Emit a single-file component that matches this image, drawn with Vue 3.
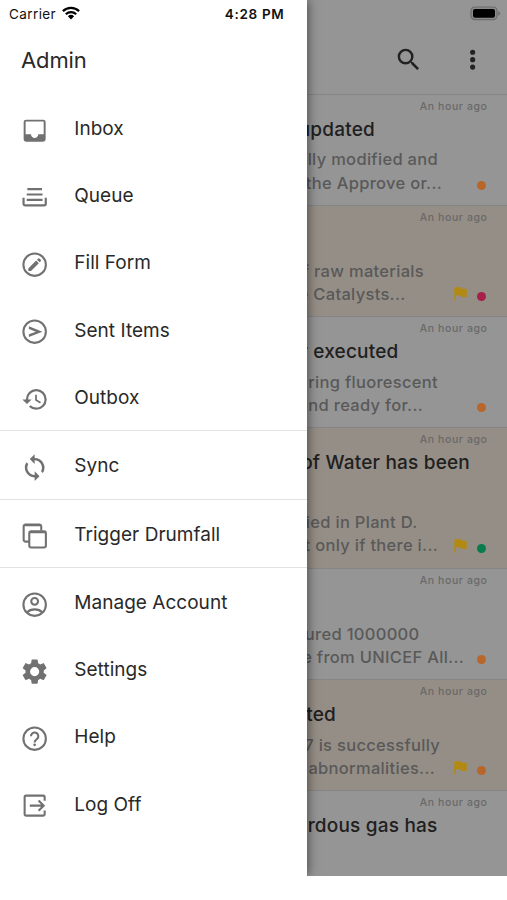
<script setup>
const groups = [
  [
    { label: 'Inbox', icon: 'inbox' },
    { label: 'Queue', icon: 'queue' },
    { label: 'Fill Form', icon: 'form' },
    { label: 'Sent Items', icon: 'sent' },
    { label: 'Outbox', icon: 'outbox' }
  ],
  [{ label: 'Sync', icon: 'sync' }],
  [{ label: 'Trigger Drumfall', icon: 'trigger' }],
  [
    { label: 'Manage Account', icon: 'account' },
    { label: 'Settings', icon: 'settings' },
    { label: 'Help', icon: 'help' },
    { label: 'Log Off', icon: 'logoff' }
  ]
]

// inset: distance from the right screen edge to the end of each line
const messages = [
  { title: ['updated', 132], body: [['lly modified and', 69], ['the Approve or...', 65]], dot: 'orange' },
  { title: ['', 0], body: [['f raw materials', 83], ['e Catalysts...', 101.5]], dot: 'pink', flagged: true },
  { title: ['r executed', 108.5], body: [['ring fluorescent', 69], ['and ready for...', 84]], dot: 'orange' },
  { title: ['of Water has been', 37], body: [['ied in Plant D.', 89.5], ['t only if there i...', 69]], dot: 'green', flagged: true, tall: true },
  { title: ['', 0], body: [['ured 1000000', 87.5], ['e from UNICEF All...', 43]], dot: 'orange' },
  { title: ['ted', 171], body: [['7 is successfully', 67], ['abnormalities...', 72]], dot: 'orange', flagged: true },
  { title: ['rdous gas has', 69.5], body: [], dot: '' }
]
</script>

<template>
  <div class="screen">
    <main class="feed">
      <div class="feed-status">
        <svg class="battery" viewBox="0 0 31 15">
          <rect x="1" y="1" width="26" height="12.6" rx="3.6" fill="#8b8b8b" stroke="#6c6c6c" stroke-width="1.2" />
          <rect x="3" y="2.9" width="22" height="8.9" rx="2" fill="#000" />
          <path d="M28.3 5v4.8q1.8-.8 1.8-2.4T28.3 5z" fill="#6c6c6c" />
        </svg>
      </div>
      <header class="toolbar">
        <svg class="tool" viewBox="0 0 24 24"><path fill="#222" d="M15.5 14h-.79l-.28-.27A6.47 6.47 0 0 0 16 9.5 6.5 6.5 0 1 0 9.5 16c1.61 0 3.09-.59 4.23-1.57l.27.28v.79l5 4.99L20.49 19l-4.99-5zm-6 0A4.5 4.5 0 1 1 14 9.5 4.5 4.5 0 0 1 9.5 14z" /></svg>
        <svg class="tool" viewBox="0 0 24 24" fill="#222"><circle cx="12" cy="5.9" r="2.1" /><circle cx="12" cy="12" r="2.1" /><circle cx="12" cy="18.1" r="2.1" /></svg>
      </header>
      <article v-for="(m, i) in messages" :key="i" class="message" :class="{ tinted: m.flagged, tall: m.tall }">
        <div class="time">An hour ago</div>
        <div class="title" :style="{ paddingRight: m.title[1] + 'px' }">{{ m.title[0] }}</div>
        <div class="body">
          <div v-for="(b, j) in m.body" :key="j" class="line" :style="{ paddingRight: b[1] + 'px' }">{{ b[0] }}</div>
        </div>
        <div v-if="m.dot" class="marks">
          <svg v-if="m.flagged" class="flag" viewBox="0 0 13 14"><path fill="#b28a12" d="M.3.3h7l.5 1.400h4.900v8.300H7.500L7 8.600H1.900v4.900H.3z" /></svg>
          <span class="dot" :class="m.dot"></span>
        </div>
      </article>
    </main>

    <aside class="drawer">
      <div class="status">
        <span class="carrier">Carrier</span>
        <svg class="wifi" viewBox="0 0 18 14">
          <g fill="none" stroke="#000" stroke-width="2.2"><path d="M.9 5.1a11.6 11.6 0 0 1 16.2 0" /><path d="M3.8 8.3a7.5 7.5 0 0 1 10.4 0" /></g>
          <path d="M5.9 10.3a4.5 4.5 0 0 1 6.2 0L9 13.5z" />
        </svg>
        <span class="clock">4:28 PM</span>
      </div>
      <h1>Admin</h1>
      <nav>
        <ul v-for="(g, gi) in groups" :key="gi" class="group">
          <li v-for="item in g" :key="item.label">
            <svg class="icon" viewBox="0 0 24 24" fill="#717171">
              <path v-if="item.icon === 'inbox'" d="M19 3H5a2 2 0 0 0-2 2v14c0 1.1.9 2 2 2h14a2 2 0 0 0 2-2V5a2 2 0 0 0-2-2zm0 12h-4c0 1.66-1.35 3-3 3s-3-1.34-3-3H4.6V4.6H19.4V15z" />
              <g v-else-if="item.icon === 'queue'" fill="none" stroke="#717171" stroke-width="1.8"><path d="M6 5h12M5.500 9.400h13M5.500 13.800h13" /><path d="M2.900 12v5a1.300 1.300 0 0 0 1.300 1.300h15.600a1.300 1.300 0 0 0 1.300-1.300V12" /></g>
              <g v-else-if="item.icon === 'form'"><circle cx="12" cy="12" r="9.2" fill="none" stroke="#717171" stroke-width="1.7" /><path d="M6.8 15.1v2.200h2.200l6.400-6.500-2.200-2.200zM17.100 9.100a.7.7 0 0 0 0-.9l-1.300-1.300a.7.7 0 0 0-.9 0l-1 1 2.200 2.200z" /></g>
              <g v-else-if="item.icon === 'sent'"><circle cx="12" cy="12" r="9.2" fill="none" stroke="#717171" stroke-width="1.7" /><path d="M7.300 7.600 18.300 12 7.300 16.400v-2.300L13 12 7.300 9.900z" /></g>
              <path v-else-if="item.icon === 'outbox'" d="M13 3a9 9 0 0 0-9 9H1l3.890 3.890.07.14L9 12H6c0-3.870 3.130-7 7-7s7 3.130 7 7-3.130 7-7 7a6.950 6.950 0 0 1-4.940-2.060l-1.420 1.420A8.950 8.950 0 0 0 13 21a9 9 0 0 0 0-18zm-1 5v5l4.250 2.520.77-1.280-3.520-2.090V8z" transform="translate(1 .4) scale(.95)" />
              <path v-else-if="item.icon === 'sync'" d="M12 4V1L8 5l4 4V6a6 6 0 0 1 5.250 8.900l1.460 1.460A8 8 0 0 0 12 4zm0 14a6 6 0 0 1-5.250-8.900L5.290 7.640A8 8 0 0 0 12 20v3l4-4-4-4z" />
              <g v-else-if="item.icon === 'trigger'" fill="none" stroke="#717171" stroke-width="1.7"><path d="M7.300 16.900H4.600A1.600 1.600 0 0 1 3 15.300V4.400a1.600 1.600 0 0 1 1.600-1.600h11.200a1.600 1.600 0 0 1 1.600 1.600v3.400" /><rect x="7.600" y="8.400" width="13.600" height="13.300" rx="1.600" /><path d="M3.700 3.500h13M8.200 9.100h12.400" /></g>
              <g v-else-if="item.icon === 'account'" fill="none" stroke="#717171" stroke-width="1.7"><circle cx="12" cy="12" r="9.2" /><circle cx="12" cy="9.3" r="2.8" /><path d="M5.9 18.3c1.3-1.5 3.5-2.4 6.1-2.4s4.8.9 6.1 2.4" /></g>
              <path v-else-if="item.icon === 'settings'" d="M19.14 12.94c.04-.3.06-.61.06-.94 0-.32-.02-.64-.07-.94l2.03-1.58a.49.49 0 0 0 .12-.61l-1.92-3.32a.488.488 0 0 0-.59-.22l-2.39.96c-.5-.38-1.03-.7-1.62-.94l-.36-2.54a.484.484 0 0 0-.48-.41h-3.84c-.24 0-.43.17-.47.41l-.36 2.54c-.59.24-1.13.57-1.62.94l-2.39-.96c-.22-.08-.47 0-.59.22L2.74 8.87c-.12.21-.08.47.12.61l2.03 1.58c-.05.3-.09.63-.09.94s.02.64.07.94l-2.03 1.58a.49.49 0 0 0-.12.61l1.92 3.32c.12.22.37.29.59.22l2.39-.96c.5.38 1.03.7 1.62.94l.36 2.54c.05.24.24.41.48.41h3.84c.24 0 .44-.17.47-.41l.36-2.54c.59-.24 1.13-.56 1.62-.94l2.39.96c.22.08.47 0 .59-.22l1.92-3.32c.12-.22.07-.47-.12-.61l-2.01-1.58zM12 15.6A3.6 3.6 0 1 1 12 8.4a3.6 3.6 0 0 1 0 7.2z" transform="translate(-.5 -.5) scale(1.04)" />
              <g v-else-if="item.icon === 'help'"><circle cx="12" cy="12" r="9.2" fill="none" stroke="#717171" stroke-width="1.7" /><path d="M9 10a3 3 0 1 1 5.1 2.1c-1 1-2.1 1.5-2.1 3" fill="none" stroke="#717171" stroke-width="1.7" /><circle cx="12" cy="17.1" r="1.1" /></g>
              <g v-else fill="none" stroke="#717171" stroke-width="1.7"><path d="M20.2 8V5A1.200 1.200 0 0 0 19 3.800H5A1.200 1.200 0 0 0 3.800 5v14A1.200 1.200 0 0 0 5 20.200h14a1.200 1.200 0 0 0 1.200-1.200v-3" /><path d="M8 12h11M15.200 7.800l4.200 4.200-4.200 4.200" /></g>
            </svg>
            <span class="label">{{ item.label }}</span>
          </li>
        </ul>
      </nav>
    </aside>
  </div>
</template>

<style>
body {
  background: #fff;
}
</style>

<style scoped>
.screen {
  position: relative;
  width: 507px;
  height: 900px;
  overflow: hidden;
  background: #fff;
  font-family: Inter, "Liberation Sans", sans-serif;
}
.feed {
  height: 876px;
  overflow: hidden;
  background: #959595;
}
.feed-status {
  display: flex;
  justify-content: flex-end;
  height: 28px;
  padding: 6px 6px 0 0;
  box-sizing: border-box;
}
.battery {
  width: 31px;
  height: 15px;
}
.toolbar {
  display: flex;
  justify-content: flex-end;
  align-items: center;
  gap: 34px;
  height: 65.5px;
  padding: 0 20px 3px 0;
  box-sizing: border-box;
}
.tool {
  width: 29.3px;
  height: 29.3px;
}
.message {
  display: grid;
  grid-template-rows: 22px 26px 1fr;
  position: relative;
  height: 111.3px;
  border-top: 1px solid #858585;
  box-sizing: border-box;
  white-space: nowrap;
  text-align: right;
}
.message.tinted {
  background: #958e86;
}
.message.tall {
  height: 140.5px;
  grid-template-rows: 22px 55px 1fr;
}
.time {
  padding-right: 19.5px;
  font-size: 10.5px;
  font-weight: 500;
  letter-spacing: 0.6px;
  line-height: 23px;
  color: #696969;
}
.title {
  font-size: 19px;
  font-weight: 500;
  letter-spacing: 0.2px;
  line-height: 25px;
  color: #202020;
}
.body {
  padding-top: 5.8px;
}
.line {
  font-size: 16.5px;
  font-weight: 500;
  letter-spacing: 0.3px;
  line-height: 23.3px;
  color: #595959;
}
.marks {
  position: absolute;
  right: 21px;
  bottom: 13px;
  display: flex;
  align-items: flex-end;
  gap: 10px;
}
.flag {
  width: 13px;
  height: 14px;
  margin-bottom: 2px;
}
.dot {
  width: 9px;
  height: 9px;
  margin-bottom: 2px;
  border-radius: 50%;
}
.orange {
  background: #b8662a;
}
.pink {
  background: #a51f49;
}
.green {
  background: #087c4d;
}
.drawer {
  position: absolute;
  left: 0;
  top: 0;
  width: 306.5px;
  height: 876px;
  background: #fff;
  box-shadow: 1px 0 10px rgba(0, 0, 0, 0.5);
  clip-path: inset(0 -30px 0 0);
}
.status {
  display: flex;
  align-items: center;
  height: 28px;
  padding: 0 22px 0 9px;
  font-size: 13.5px;
  color: #111;
}
.carrier {
  letter-spacing: 0.4px;
}
.wifi {
  width: 18px;
  height: 14px;
  margin: 0 0 3px 6px;
}
.clock {
  margin-left: auto;
  font-weight: 600;
  letter-spacing: 0.7px;
}
h1 {
  margin: 0;
  padding: 18px 0 0 21px;
  height: 66px;
  box-sizing: border-box;
  font-size: 22px;
  font-weight: 400;
  letter-spacing: -0.1px;
  line-height: 29px;
  color: #292929;
}
.group {
  margin: 0;
  padding: 0;
  list-style: none;
}
.group + .group {
  border-top: 1px solid #e2e2e2;
}
.group li {
  display: flex;
  align-items: center;
  gap: 24.7px;
  height: 67.3px;
  padding: 5px 0 0 20.3px;
  box-sizing: border-box;
}
.icon {
  flex: none;
  width: 29.3px;
  height: 29.3px;
}
.label {
  padding-bottom: 2.8px;
  font-size: 19px;
  letter-spacing: 0.03px;
  line-height: 24px;
  color: #292929;
}
</style>
